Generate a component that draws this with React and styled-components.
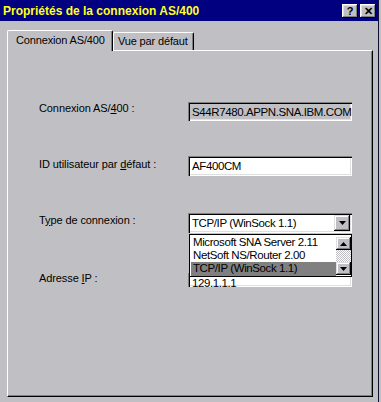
import React from 'react';
import styled, { createGlobalStyle } from 'styled-components';

const Global = createGlobalStyle`
  html, body { margin: 0; padding: 0; background: #c0c0c4; }
  body { font-family: "Liberation Sans", Arial, sans-serif; }
  #root { width: 381px; height: 402px; }
`;

const Window = styled.div`
  width: 379px;
  height: 402px;
  box-sizing: border-box;
  background: #c0c0c4;
  border-right: 1px solid #101030;
  display: flex;
  flex-direction: column;
  overflow: hidden;
`;

const TitleBar = styled.div`
  height: 21px;
  flex: none;
  background: #000080;
  display: flex;
  align-items: center;
  justify-content: space-between;
  padding: 1px 2px 0 3px;
  box-sizing: border-box;
`;

const Title = styled.span`
  color: #ffff20;
  font-weight: bold;
  font-size: 12px;
  letter-spacing: 0;
  white-space: nowrap;
`;

const CaptionButtons = styled.div`
  display: flex;
  gap: 2px;
`;

const CaptionButton = styled.div`
  width: 16px;
  height: 14px;
  box-sizing: border-box;
  background: #c0c0c4;
  box-shadow: inset -1px -1px #000, inset 1px 1px #fff, inset -2px -2px #808080, inset 2px 2px #dfdfdf;
  display: flex;
  align-items: center;
  justify-content: center;
  color: #000;
  font-weight: bold;
  font-size: 11px;
  line-height: 1;
`;

const Body = styled.div`
  flex: 1;
  display: flex;
  flex-direction: column;
  padding: 9px 6px 5px 7px;
  min-height: 0;
`;

const Tabs = styled.div`
  display: flex;
  align-items: flex-end;
  height: 20px;
  position: relative;
  z-index: 1;
  flex: none;
`;

const Tab = styled.div`
  box-sizing: border-box;
  height: ${p => (p.$active ? '21px' : '18px')};
  margin-bottom: ${p => (p.$active ? '-1px' : '0')};
  width: ${p => p.$w}px;
  padding-left: ${p => p.$pad}px;
  padding-top: ${p => (p.$active ? '3px' : '2px')};
  background: #c0c0c4;
  border-top: 1px solid #fff;
  border-left: 1px solid #fff;
  border-right: 1px solid #000;
  border-radius: 2px 2px 0 0;
  box-shadow: inset -1px 0 #808080;
  font-size: 11px;
  letter-spacing: -0.15px;
  color: #000;
  white-space: nowrap;
`;

const Panel = styled.div`
  flex: 1;
  box-sizing: border-box;
  border-top: 1px solid #fff;
  border-left: 1px solid #fff;
  border-right: 1px solid #000;
  border-bottom: 1px solid #000;
  box-shadow: inset -1px -1px #808080;
  padding: 51px 0 0 31px;
  width: 366px;
`;

const Row = styled.div`
  display: grid;
  grid-template-columns: 149px 164px;
  align-items: start;
  margin-top: ${p => p.$mt || 0}px;
  position: relative;
`;

const Label = styled.div`
  font-size: 11px;
  line-height: 13px;
  letter-spacing: -0.1px;
  color: #000;
  white-space: nowrap;
  margin-top: ${p => p.$mt || 0}px;
`;

const U = styled.span`
  text-decoration: underline;
  text-underline-offset: 1px;
`;

const Field = styled.div`
  box-sizing: border-box;
  height: ${p => p.$h || 20}px;
  background: ${p => (p.$readOnly ? '#c0c0c4' : '#fff')};
  box-shadow: inset 1px 1px #808080, inset 2px 2px #000, inset -1px -1px #fff, inset -2px -2px #dfdfdf;
  padding: 3px 0 0 4px;
  font-size: 11.5px;
  line-height: 14px;
  letter-spacing: -0.4px;
  color: #000;
  white-space: nowrap;
  overflow: hidden;
  position: relative;
`;

const ComboWrap = styled.div`
  position: relative;
`;

const ArrowButton = styled.div`
  position: absolute;
  right: 2px;
  top: 2px;
  width: 16px;
  height: ${p => p.$h || 16}px;
  box-sizing: border-box;
  background: #c0c0c4;
  box-shadow: inset -1px -1px #000, inset 1px 1px #dfdfdf, inset -2px -2px #808080, inset 2px 2px #fff;
  display: flex;
  align-items: center;
  justify-content: center;
`;

const DropList = styled.div`
  position: absolute;
  left: 1px;
  top: 21px;
  width: 163px;
  box-sizing: border-box;
  background: #fff;
  border: 1px solid #000;
  display: flex;
  z-index: 5;
`;

const Items = styled.div`
  flex: 1;
  padding: 1px 0 0 1px;
`;

const Item = styled.div`
  height: ${p => (p.$selected ? 14 : 13)}px;
  line-height: 13px;
  padding-left: 2px;
  font-size: 11.5px;
  letter-spacing: -0.4px;
  color: #000;
  background: ${p => (p.$selected ? '#808080' : 'transparent')};
  white-space: nowrap;
`;

const ScrollBar = styled.div`
  width: 15px;
  display: flex;
  flex-direction: column;
  padding: 2px 0 1px;
  box-sizing: border-box;
`;

const ScrollButton = styled.div`
  height: 13px;
  width: 15px;
  box-sizing: border-box;
  background: #c0c0c4;
  box-shadow: inset -1px -1px #000, inset 1px 1px #dfdfdf, inset -2px -2px #808080, inset 2px 2px #fff;
  display: flex;
  align-items: center;
  justify-content: center;
`;

const Track = styled.div`
  flex: 1;
  background: repeating-conic-gradient(#fff 0 25%, #c0c0c4 0 50%) 0 0 / 2px 2px;
`;

const Arrow = ({ up }) => (
  <svg width="7" height="4" viewBox="0 0 7 4">
    <polygon points={up ? '3.5,0 7,4 0,4' : '0,0 7,0 3.5,4'} fill="#000" />
  </svg>
);

export default function App() {
  return (
    <>
      <Global />
      <Window>
        <TitleBar>
          <Title>Propriétés de la connexion AS/400</Title>
          <CaptionButtons>
            <CaptionButton>?</CaptionButton>
            <CaptionButton>✕</CaptionButton>
          </CaptionButtons>
        </TitleBar>
        <Body>
          <Tabs>
            <Tab $active $w={106} $pad={8}>Connexion AS/400</Tab>
            <Tab $w={81} $pad={4}>Vue par défaut</Tab>
          </Tabs>
          <Panel>
            <Row>
              <Label>Connexion AS/<U>4</U>00 :</Label>
              <Field $readOnly $h={19}>S44R7480.APPN.SNA.IBM.COM</Field>
            </Row>
            <Row $mt={35}>
              <Label $mt={2}>ID utilisateur par <U>d</U>éfaut :</Label>
              <Field>AF400CM</Field>
            </Row>
            <Row $mt={37}>
              <Label $mt={1}>T<U>y</U>pe de connexion :</Label>
              <ComboWrap>
                <Field>TCP/IP (WinSock 1.1)</Field>
                <ArrowButton>
                  <Arrow />
                </ArrowButton>
                <DropList>
                  <Items>
                    <Item>Microsoft SNA Server 2.11</Item>
                    <Item>NetSoft NS/Router 2.00</Item>
                    <Item $selected>TCP/IP (WinSock 1.1)</Item>
                  </Items>
                  <ScrollBar>
                    <ScrollButton><Arrow up /></ScrollButton>
                    <Track />
                    <ScrollButton><Arrow /></ScrollButton>
                  </ScrollBar>
                </DropList>
              </ComboWrap>
            </Row>
            <Row $mt={40}>
              <Label $mt={-1}>Adresse <U>I</U>P :</Label>
              <Field $h={14}>129.1.1.1</Field>
            </Row>
          </Panel>
        </Body>
      </Window>
    </>
  );
}
